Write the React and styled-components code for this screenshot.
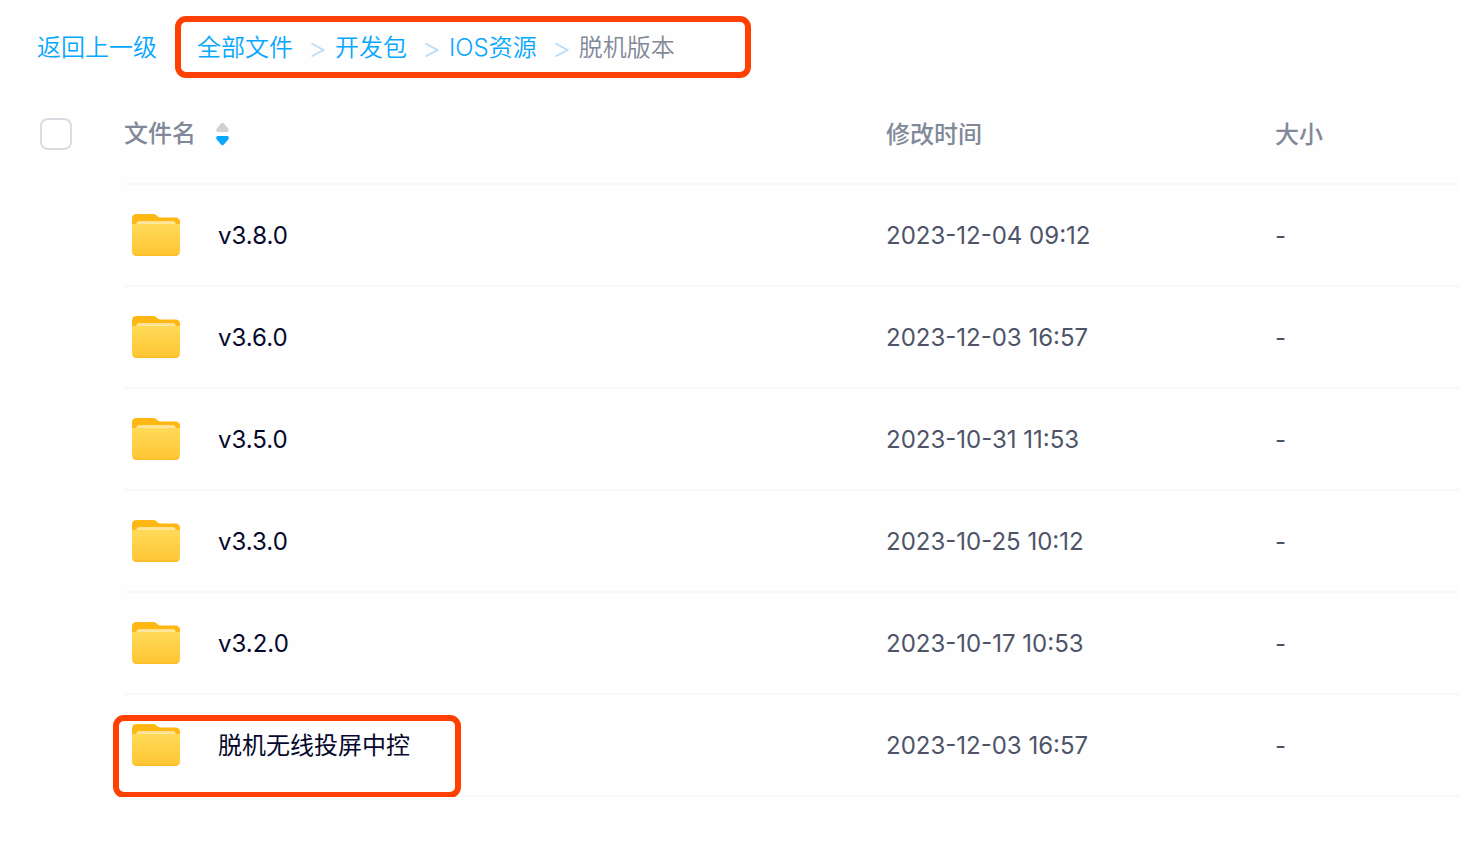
import React, { useState } from 'react'
import styled, { createGlobalStyle } from 'styled-components'

const GlobalStyle = createGlobalStyle`
* {
  box-sizing: border-box;
}

body {
  margin: 0;
  background: #fefefe;
  font-family: Inter, 'Noto Sans CJK SC', sans-serif;
  font-size: 24px;
  line-height: 36px;
}
`

const Page = styled.main`
padding-top: 16px;
`

const TopBar = styled.div`
display: flex;
align-items: center;
gap: 18px;
padding: 0 37px;
`

const StyledLink = styled.a`
padding-top: 2px;
color: #06a7ff;
font-weight: 350;
text-decoration: none;
white-space: nowrap;
`

const Breadcrumb = styled.nav`
width: 576px;
padding: 6px 16px;
border: 6px solid #ff4000;
border-radius: 11px;

ol {
  display: flex;
  align-items: center;
  height: 38px;
  margin: 0;
  padding: 0;
  list-style: none;
}

li {
  display: flex;
  align-items: center;
  white-space: nowrap;
}
`

const Current = styled.span`
padding-top: 2px;
color: #818999;
font-weight: 350;
`

const Chevron = styled.svg`
width: 14px;
height: 18px;
margin: 6px 10px 0 18px;
`

const FileTable = styled.table`
width: 100%;
margin-top: 5px;
border-collapse: separate;
border-spacing: 0;
table-layout: fixed;
`

const CheckCol = styled.col`
width: 124px;
`

const TimeCol = styled.col`
width: 389px;
`

const SizeCol = styled.col`
width: 185px;
`

const HeadCell = styled.th`
height: 102px;
padding: ${props => (props.$sortable ? '2px' : '4px')} 0 0;
border-bottom: 2px solid #f7f8f9;
color: #818999;
font-weight: 500;
text-align: left;
`

const CheckCell = styled.td`
padding: 0 0 0 40px;
`

const Checkbox = styled.input`
appearance: none;
display: block;
width: 32px;
height: 32px;
margin: 0;
border: 2px solid #d9dce1;
border-radius: 8px;
background: #fff;

&:checked {
  border-color: #06a7ff;
  background: #06a7ff;
}
`

const SortButton = styled.button`
display: flex;
align-items: center;
gap: 20px;
padding: 0;
border: 0;
background: none;
color: inherit;
font: inherit;
cursor: pointer;

svg {
  width: 14px;
  height: 24px;
}
`

const Cell = styled.td`
height: 102px;
padding: 2px 0 0;
border-bottom: 2px solid #f7f8f9;
color: #4e5468;
`

const NameCell = styled(Cell)`
padding: 0;
`

const FileName = styled.div`
position: relative;
display: flex;
align-items: center;
gap: 38px;
height: 100px;
padding-left: 8px;

a {
  padding-top: 2px;
  color: #05082c;
  text-decoration: none;
}
`

const Marker = styled.span`
position: absolute;
top: 20px;
left: -11px;
width: 348px;
height: 83px;
border: 6px solid #ff4000;
border-radius: 11px;
pointer-events: none;
`

const FolderSvg = styled.svg`
flex: none;
width: 48px;
height: 44px;
`

function Folder() {
    return (
        <FolderSvg viewBox='0 0 48 44' aria-hidden='true'>
            <defs>
                <linearGradient id='folder-front' x1='0' y1='0' x2='0' y2='1'>
                    <stop offset='0' stopColor='#ffda58' />
                    <stop offset='1' stopColor='#ffc533' />
                </linearGradient>
                <linearGradient id='folder-paper' x1='0' y1='0' x2='0' y2='1'>
                    <stop offset='0' stopColor='#ffe08a' />
                    <stop offset='1' stopColor='#fff0bd' />
                </linearGradient>
            </defs>
            <path d='M0 5.500Q0 1 4.500 1H21Q23 1 24.500 2.300L26 3.700Q27 4.500 29 4.500H43Q48 4.500 48 9V20H0Z' fill='#ffb714' />
            <path d='M4.500 14V11Q4.500 8 7.500 8H40.500Q43.500 8 43.500 11V14Z' fill='url(#folder-paper)' />
            <path d='M0 11H48V38Q48 43 43 43H5Q0 43 0 38Z' fill='url(#folder-front)' />
            <path d='M0.500 40Q1.800 43 5 43H43Q46.200 43 47.500 40Q46 41.500 43 41.500H5Q2 41.500 0.500 40Z' fill='#fdbd28' />
        </FolderSvg>
    )
}

const parents = ['全部文件', '开发包', 'IOS资源']

const files = [
    { name: 'v3.8.0', time: '2023-12-04 09:12' },
    { name: 'v3.6.0', time: '2023-12-03 16:57' },
    { name: 'v3.5.0', time: '2023-10-31 11:53' },
    { name: 'v3.3.0', time: '2023-10-25 10:12' },
    { name: 'v3.2.0', time: '2023-10-17 10:53' },
    { name: '脱机无线投屏中控', time: '2023-12-03 16:57', marked: true },
]

export default function App() {
    const [checked, setChecked] = useState(false)

    return (
        <Page>
            <GlobalStyle />
            <TopBar>
                <StyledLink href='#back'>返回上一级</StyledLink>
                <Breadcrumb>
                    <ol>
                        {parents.map(name => (
                            <li key={name}>
                                <StyledLink href='#folder'>{name}</StyledLink>
                                <Chevron viewBox='0 0 14 18' aria-hidden='true'>
                                    <path d='M0.500 2.500L12.500 9L0.500 15.500' fill='none' stroke='#b9dcf8' strokeWidth='1.800' />
                                </Chevron>
                            </li>
                        ))}
                        <li><Current>脱机版本</Current></li>
                    </ol>
                </Breadcrumb>
            </TopBar>
            <FileTable>
                <colgroup>
                    <CheckCol />
                    <col />
                    <TimeCol />
                    <SizeCol />
                </colgroup>
                <thead>
                    <tr>
                        <CheckCell>
                            <Checkbox
                                type='checkbox'
                                aria-label='全选'
                                checked={checked}
                                onChange={e => setChecked(e.target.checked)}
                            />
                        </CheckCell>
                        <HeadCell $sortable>
                            <SortButton type='button'>
                                文件名
                                <svg viewBox='0 0 14 24' aria-hidden='true'>
                                    <path d='M1.500 10Q-0.800 8.500 0.800 6.500L5 1.500Q6.500 0 8 1.500L12.200 6.500Q13.800 8.500 11.500 10Z' fill='#cfd1d6' />
                                    <path d='M1.500 14Q-0.800 15 0.800 17.500L5 22.500Q6.500 24 8 22.500L12.200 17.500Q13.800 15 11.500 14Z' fill='#06a7ff' />
                                </svg>
                            </SortButton>
                        </HeadCell>
                        <HeadCell>修改时间</HeadCell>
                        <HeadCell>大小</HeadCell>
                    </tr>
                </thead>
                <tbody>
                    {files.map(file => (
                        <tr key={file.name}>
                            <td></td>
                            <NameCell>
                                <FileName>
                                    <Folder />
                                    <a href='#file'>{file.name}</a>
                                    {file.marked && <Marker />}
                                </FileName>
                            </NameCell>
                            <Cell>{file.time}</Cell>
                            <Cell>-</Cell>
                        </tr>
                    ))}
                </tbody>
            </FileTable>
        </Page>
    )
}
